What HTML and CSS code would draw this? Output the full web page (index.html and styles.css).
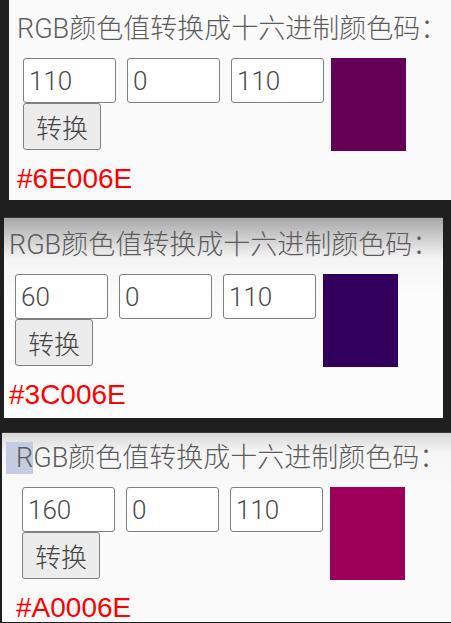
FILE: index.html
```html
<!DOCTYPE html>
<html lang="zh-CN">
<head>
    <meta charset="UTF-8">
    <meta name="viewport" content="width=device-width, initial-scale=1.0">
    <title>RGB转十六进制</title>
    <link rel="stylesheet" href="styles.css">
</head>
<body>
    <div class="shot shot-a">
        <div class="title">RGB颜色值转换成十六进制颜色码：</div>
        <div class="row">
            <div class="form">
                <input class="num" type="text" value="110">
                <input class="num" type="text" value="0">
                <input class="num" type="text" value="110">
                <button class="convert">转换</button>
            </div>
            <div class="swatch" style="background: #650057;"></div>
        </div>
        <div class="result">#6E006E</div>
    </div>

    <div class="shot shot-b">
        <div class="title">RGB颜色值转换成十六进制颜色码：</div>
        <div class="row">
            <div class="form">
                <input class="num" type="text" value="60">
                <input class="num" type="text" value="0">
                <input class="num" type="text" value="110">
                <button class="convert">转换</button>
            </div>
            <div class="swatch" style="background: #32005c;"></div>
        </div>
        <div class="result">#3C006E</div>
    </div>

    <div class="shot shot-c">
        <div class="title"><span class="sel">R</span>GB颜色值转换成十六进制颜色码：</div>
        <div class="row">
            <div class="form">
                <input class="num" type="text" value="160">
                <input class="num" type="text" value="0">
                <input class="num" type="text" value="110">
                <button class="convert">转换</button>
            </div>
            <div class="swatch" style="background: #9c0058;"></div>
        </div>
        <div class="result">#A0006E</div>
    </div>
</body>
</html>
```

FILE: styles.css
```css
body {
    margin: 0;
    height: 623px;
    overflow: hidden;
    background-color: #1f1f1f;
    font-family: 'Roboto', 'Noto Sans CJK SC', sans-serif;
}
.shot {
    box-sizing: border-box;
    background-color: #fafafa;
    overflow: hidden;
}
.shot-a {
    margin-left: 9px;
    width: 442px;
    height: 200px;
    padding: 14px 0 0 8px;
}
.shot-b {
    margin: 17px 0 0 4px;
    width: 439px;
    height: 201px;
    padding: 12px 0 0 5px;
    background: linear-gradient(#a8a8a8 0, #f4f4f4 40px, #fcfcfc 80px);
    border-top: 1px solid #3a3a3a;
}
.shot-c {
    margin: 14px 0 0 2px;
    width: 449px;
    height: 190px;
    padding: 10px 0 0 14px;
    background: linear-gradient(#d8d8d8 0, #f6f6f6 20px, #fafafa 60px);
    border-top: 1px solid #3a3a3a;
}
.title {
    font-family: 'Roboto', 'Noto Sans CJK SC', sans-serif;
    font-size: 27px;
    line-height: 30px;
    font-weight: 300;
    color: #5c5c5c;
    white-space: nowrap;
}
.sel {
    background-color: #c5cbe0;
    padding-left: 10px;
    margin-left: -10px;
}
.row {
    display: flex;
    align-items: flex-start;
    gap: 7px;
    margin: 14px 0 0 6px;
}
.form {
    width: 301px;
    display: flex;
    flex-wrap: wrap;
    column-gap: 11px;
}
.num {
    box-sizing: border-box;
    width: 93px;
    height: 45px;
    margin: 0;
    padding: 0 5px;
    border: 1px solid #808080;
    border-radius: 3px;
    background: #fff;
    font-family: 'Roboto', sans-serif;
    font-weight: 300;
    font-size: 26px;
    color: #4a4a4a;
    outline: none;
}
.convert {
    box-sizing: border-box;
    width: 78px;
    height: 47px;
    margin: 0;
    padding: 0;
    border: 1px solid #808080;
    border-radius: 3px;
    background: #ececec;
    font-family: 'Noto Sans CJK SC', sans-serif;
    font-weight: 300;
    font-size: 26px;
    color: #444;
}
.swatch {
    width: 75px;
    height: 93px;
}
.result {
    margin-top: 12px;
    font-family: 'Liberation Sans', Arial, sans-serif;
    font-size: 28px;
    line-height: 32px;
    color: #f00;
}
```
